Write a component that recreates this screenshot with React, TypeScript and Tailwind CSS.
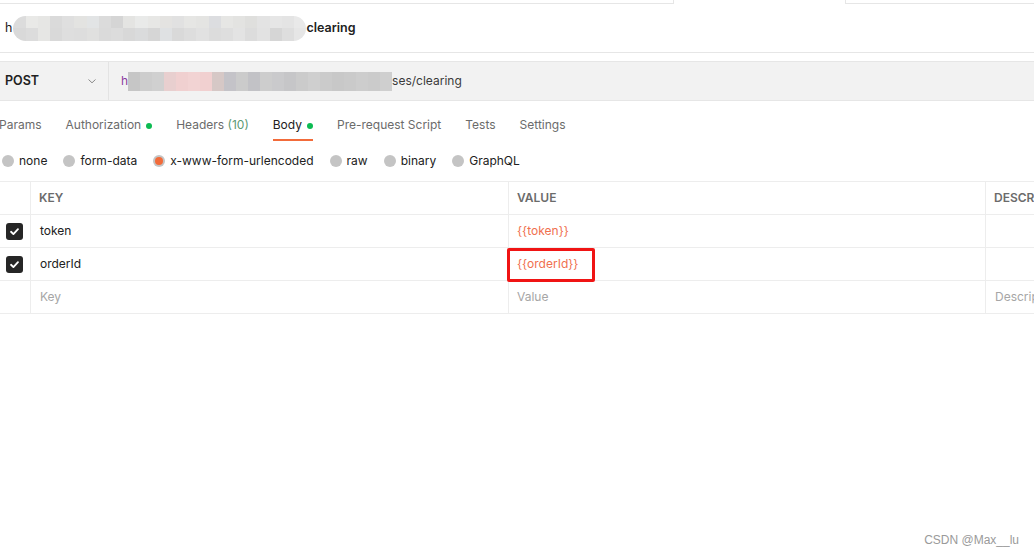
import React from 'react'

const titleBlur = [
  ['#dcdcdc', '#e9e9e7', '#e6e6e4', '#dadada', '#dfdfdf', '#e3e3e1', '#e2e4e5', '#dbdbdb', '#d5d5d5', '#e4e4e2', '#e9eae9', '#e7e7e5', '#e4e3e1', '#e1e1e1', '#e6e6e4', '#e4e4e2', '#dcdde0', '#e6e6e4', '#e3e3e1', '#dfdfdd', '#e3e3e3', '#e6e6e6', '#e4e4e4', '#e9e9e9'],
  ['#d9d9d9', '#dcdcdc', '#e6e6e4', '#d9d9d9', '#dedede', '#dddddd', '#e0e0df', '#dadada', '#dcdcdc', '#d8d8d8', '#dadbdc', '#d6d6d6', '#dfe1e3', '#d9d9d9', '#dddddd', '#e1e1e1', '#dcdcdc', '#dedede', '#e3e3e3', '#dcdcdc', '#e2e2e2', '#d6d6d6', '#dedede', '#e6e6e6'],
]

const urlBlur = [
  '#c6c6c6', '#cdcdcd', '#d0d0d0', '#e8cfcf', '#f0d0d0', '#f2d3d3', '#f1d0d0', '#d6c8c6', '#c4c3c8', '#cbcbcb', '#c2c2c6', '#cdcdcd', '#cacacc', '#c6c6c8', '#cbcbcb', '#cfcfcf', '#cbcbcb', '#c8c8c8', '#cacaca', '#cdcdcd', '#cbcbcb', '#cfcfcf',
]

const tabs = [
  { label: 'Params' },
  { label: 'Authorization', dot: true },
  { label: 'Headers', count: '(10)' },
  { label: 'Body', dot: true, active: true },
  { label: 'Pre-request Script' },
  { label: 'Tests' },
  { label: 'Settings' },
]

const bodyTypes = ['none', 'form-data', 'x-www-form-urlencoded', 'raw', 'binary', 'GraphQL']

const rows = [
  { key: 'token', value: '{{token}}' },
  { key: 'orderId', value: '{{orderId}}', marked: true },
]

function Check() {
  return (
    <span className="flex h-[17px] w-[17px] items-center justify-center rounded-[3px] bg-[#262626]">
      <svg width="11" height="11" viewBox="0 0 12 12" fill="none">
        <path d="M2.2 6.3 4.8 8.8 9.8 3.4" stroke="#fff" strokeWidth="2" strokeLinecap="round" strokeLinejoin="round" />
      </svg>
    </span>
  )
}

export default function App() {
  return (
    <div className="relative h-[557px] w-[1034px] overflow-hidden bg-white font-['Inter','Noto_Sans',sans-serif] text-[12px] text-[#212121]">
      {/* tab strip */}
      <div className="flex h-[4px]">
        <div className="w-[674px] border-b border-r border-[#e6e6e6]" />
        <div className="w-[171px]" />
        <div className="flex-1 border-b border-l border-[#e6e6e6]" />
      </div>

      {/* request name */}
      <div className="flex h-[49px] items-center border-b border-[#e6e6e6] pl-[5px] text-[12.5px]">
        <span>h</span>
        <div className="ml-[1px] flex h-[25px] w-[293px] shrink-0 flex-col overflow-hidden rounded-full">
          {titleBlur.map((row, i) => (
            <div key={i} className="flex h-[12.5px]">
              {row.map((c, j) => (
                <div key={j} className="h-full flex-1" style={{ backgroundColor: c }} />
              ))}
            </div>
          ))}
        </div>
        <span className="font-semibold">clearing</span>
      </div>

      {/* url bar */}
      <div className="mt-[8px] flex h-[40px] border-y border-[#e6e6e6] bg-[#f2f2f2]">
        <div className="flex w-[109px] shrink-0 items-center justify-between border-r border-[#e3e3e3] pl-[5px] pr-[11px]">
          <span className="text-[12.5px] font-semibold">POST</span>
          <svg width="10" height="10" viewBox="0 0 10 10" fill="none">
            <path d="M1.5 3.5 5 6.8 8.5 3.5" stroke="#8a8a8a" strokeWidth="1" />
          </svg>
        </div>
        <div className="flex items-center pl-[12px]">
          <span className="text-[#8a3c9e]">h</span>
          <div className="flex h-[19px] w-[264px] shrink-0">
            {urlBlur.map((c, i) => (
              <div key={i} className="h-full flex-1" style={{ backgroundColor: c }} />
            ))}
          </div>
          <span className="text-[#3a3a3a]">ses/clearing</span>
        </div>
      </div>

      {/* tabs */}
      <div className="-ml-[1px] mt-[13px] flex gap-[24px]">
        {tabs.map((t) => (
          <div
            key={t.label}
            className={`flex h-[27px] items-start gap-[5px] border-b-2 pt-[2px] leading-[18px] ${
              t.active ? 'border-[#f26b3a] text-[#212121]' : 'border-transparent text-[#6b6b6b]'
            }`}
          >
            <span>
              {t.label}
              {t.count && <span className="text-[#5c9a73]"> {t.count}</span>}
            </span>
            {t.dot && <span className="mt-[7px] h-[6px] w-[6px] rounded-full bg-[#0cbb52]" />}
          </div>
        ))}
      </div>

      {/* body type */}
      <div className="ml-[2px] mt-[11px] flex h-[18px] items-center gap-[16px]">
        {bodyTypes.map((b) => (
          <div key={b} className="flex items-center gap-[5px]">
            {b === 'x-www-form-urlencoded' ? (
              <span className="flex h-[12px] w-[12px] items-center justify-center rounded-full bg-[#c4c4c4]">
                <span className="h-[8px] w-[8px] rounded-full bg-[#f26b3a]" />
              </span>
            ) : (
              <span className="h-[12px] w-[12px] rounded-full bg-[#c4c4c4]" />
            )}
            <span className="text-[#212121]">{b}</span>
          </div>
        ))}
      </div>

      {/* params table */}
      <div className="mt-[11px] border-t border-[#ededed]">
        <div className="flex h-[33px] border-b border-[#ededed] font-semibold text-[#6b6b6b]">
          <div className="w-[31px] shrink-0 border-r border-[#ededed]" />
          <div className="flex w-[478px] shrink-0 items-center border-r border-[#ededed] pl-[8px]">KEY</div>
          <div className="flex w-[477px] shrink-0 items-center border-r border-[#ededed] pl-[8px]">VALUE</div>
          <div className="flex flex-1 items-center whitespace-nowrap pl-[8px]">DESCRIPTION</div>
        </div>
        {rows.map((r) => (
          <div key={r.key} className="flex h-[33px] border-b border-[#ededed]">
            <div className="flex w-[31px] shrink-0 items-center justify-center border-r border-[#ededed] pr-[1px]">
              <Check />
            </div>
            <div className="flex w-[478px] shrink-0 items-center border-r border-[#ededed] pl-[9px]">{r.key}</div>
            <div className="relative flex w-[477px] shrink-0 items-center border-r border-[#ededed] pl-[8px] text-[#f0704f]">
              {r.value}
              {r.marked && (
                <div className="absolute left-[-2px] top-0 h-[34px] w-[88px] rounded-[2px] border-[3px] border-[#f01414]" />
              )}
            </div>
            <div className="flex-1" />
          </div>
        ))}
        <div className="flex h-[33px] border-b border-[#ededed] text-[#a6a6a6]">
          <div className="w-[31px] shrink-0 border-r border-[#ededed]" />
          <div className="flex w-[478px] shrink-0 items-center border-r border-[#ededed] pl-[9px]">Key</div>
          <div className="flex w-[477px] shrink-0 items-center border-r border-[#ededed] pl-[8px]">Value</div>
          <div className="flex flex-1 items-center whitespace-nowrap pl-[9px]">Description</div>
        </div>
      </div>

      {/* watermark */}
      <div className="absolute bottom-[8px] right-[15px] font-['Liberation_Sans',sans-serif] text-[12px] text-[#9a9a9a]">
        CSDN @Max__lu
      </div>
    </div>
  )
}
